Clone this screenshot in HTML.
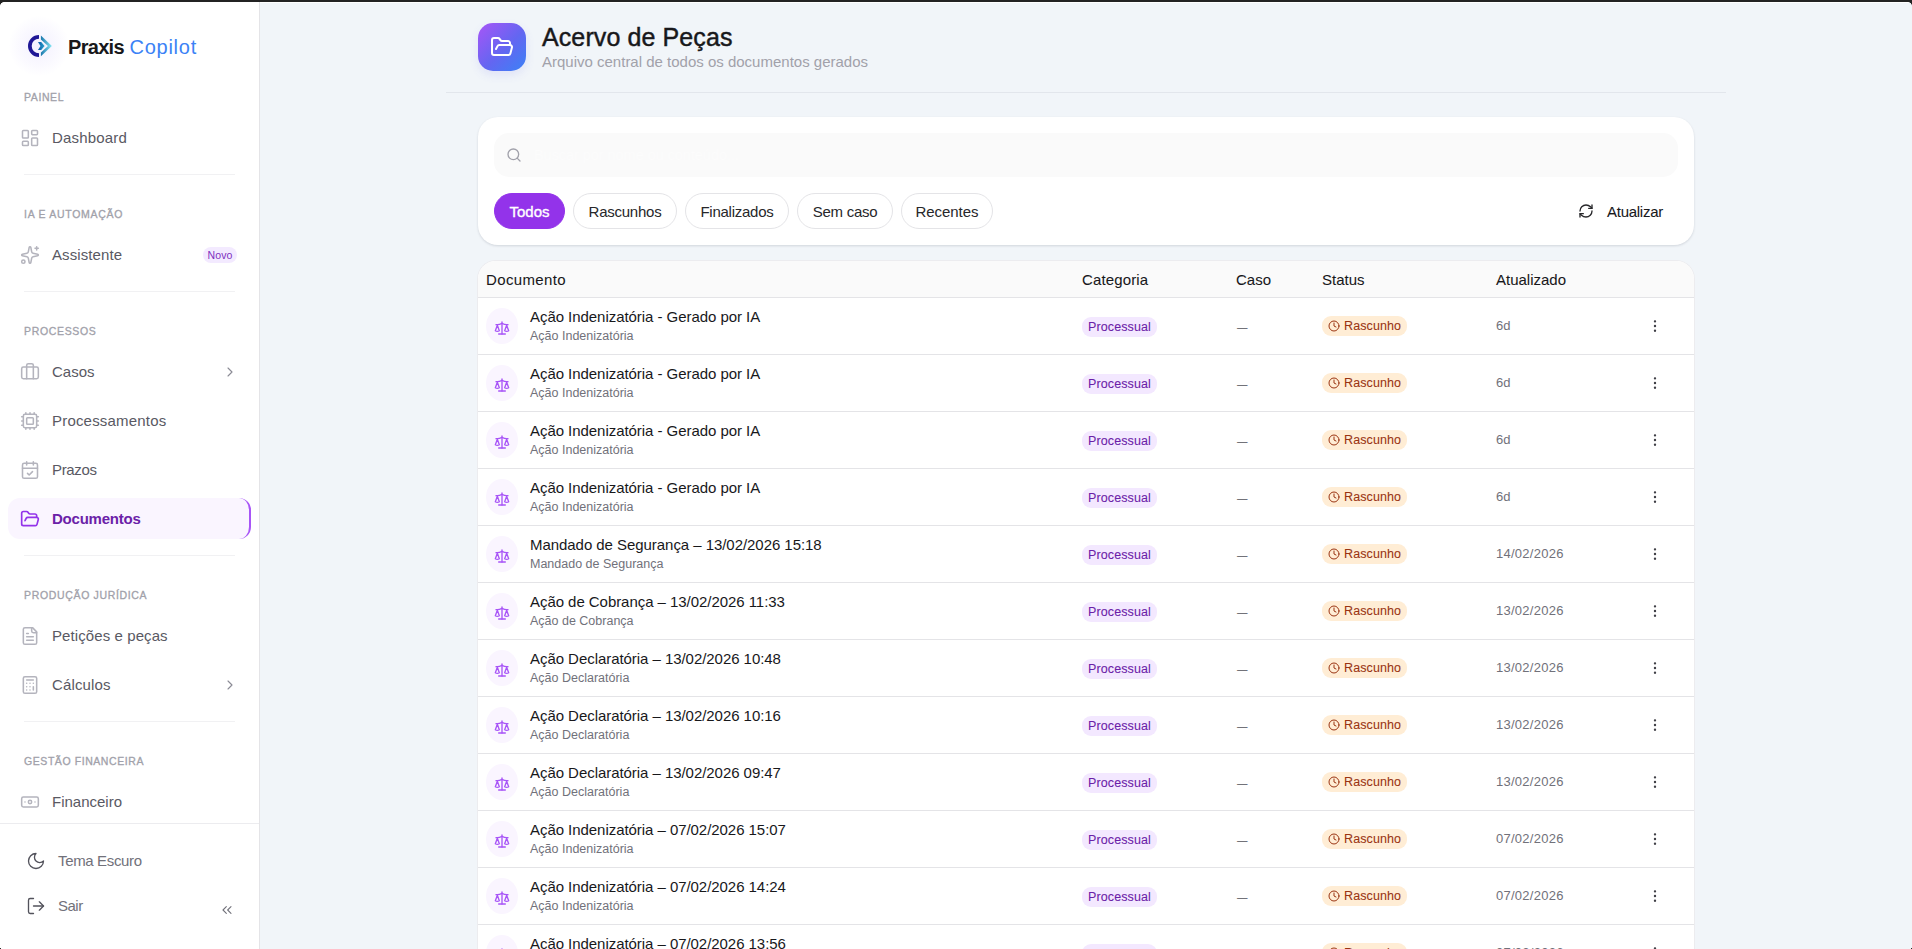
<!DOCTYPE html>
<html lang="pt-BR">
<head>
<meta charset="utf-8">
<title>Praxis Copilot - Acervo de Peças</title>
<style>
*{box-sizing:border-box;margin:0;padding:0}
html,body{width:1912px;height:949px;overflow:hidden}
body{font-family:"Liberation Sans",sans-serif;background:#f1f5f9;color:#18181b;position:relative}
.topbar{position:absolute;left:0;top:0;width:1912px;height:2px;background:#232323;z-index:50}
.topline{position:absolute;left:260px;top:2px;width:1652px;height:1px;background:#fff;z-index:49}
.corner{position:absolute;width:4px;height:4px;z-index:51}
.px{position:absolute;width:1px;height:1px;background:#2a2a2a;z-index:51;top:948px}
/* sidebar */
.sb{position:absolute;left:0;top:0;width:260px;height:949px;background:#fff;border-right:1px solid #e4e4e7}
.sb .abs{position:absolute}
.logo-glow{position:absolute;left:9px;top:16px;width:60px;height:60px;border-radius:50%;background:radial-gradient(circle,rgba(226,220,254,.42) 0%,rgba(237,233,254,.28) 45%,rgba(255,255,255,0) 72%)}
.brand{position:absolute;left:68px;top:35px;font-size:20px;line-height:24px;white-space:nowrap;color:#18181b}
.brand b{font-weight:700;letter-spacing:-.7px}
.brand span{color:#3b82f6;font-weight:400;letter-spacing:.76px}
.sec{position:absolute;left:24px;font-size:10.5px;line-height:14px;font-weight:400;-webkit-text-stroke:.3px #a1a1aa;color:#a1a1aa;white-space:nowrap}
.hr{position:absolute;left:24px;width:211px;height:1px;background:#f1f1f3}
.it{position:absolute;left:8px;width:243px;height:41px;border-radius:12px;color:#595963;font-size:15px;line-height:41px;white-space:nowrap}
.it svg{position:absolute;left:12px;top:11px;width:20px;height:20px;stroke:#b4b4bd;fill:none;stroke-width:1.85;stroke-linecap:round;stroke-linejoin:round}
.it .t{position:absolute;left:44px;top:0}
.it .chev{position:absolute;left:214px;top:13px;width:16px;height:16px;stroke:#8b8b95;stroke-width:1.7}
.it.act{background:#faf5ff;color:#6b21a8;font-weight:700;border-right:2px solid #a855f7}
.it.act svg{stroke:#9333ea;stroke-width:2}
.novo{position:absolute;left:195px;top:13px;width:34px;height:16px;border-radius:8px;background:#f3eaff;color:#7e30c0;font-size:10.5px;line-height:16px;text-align:center;letter-spacing:.15px}
.foot-line{position:absolute;left:0;top:823px;width:259px;height:1px;background:#ececef}
.ft{position:absolute;left:58px;font-size:15px;line-height:20px;color:#71717a;white-space:nowrap}
.fi{position:absolute;left:26px;width:20px;height:20px;stroke:#52525b;fill:none;stroke-width:1.6;stroke-linecap:round;stroke-linejoin:round}
/* main */
.hicon{position:absolute;left:478px;top:23px;width:48px;height:48px;border-radius:15px;background:linear-gradient(135deg,#a855f7 0%,#6366f1 55%,#3b82f6 100%);box-shadow:0 4px 10px rgba(99,102,241,.12)}
.hicon svg{position:absolute;left:12px;top:12px;width:24px;height:24px;stroke:#fff;fill:none;stroke-width:2;stroke-linecap:round;stroke-linejoin:round}
h1{position:absolute;left:542px;top:21px;font-size:25px;line-height:32px;font-weight:400;-webkit-text-stroke:.45px #18181b;color:#18181b;white-space:nowrap;letter-spacing:.1px}
.sub{position:absolute;left:542px;top:52px;font-size:15px;line-height:20px;color:#a1a1aa;white-space:nowrap}
.hline{position:absolute;left:446px;top:92px;width:1280px;height:1px;background:#e2e6ec}
.card{position:absolute;left:478px;top:117px;width:1216px;height:128px;border-radius:20px;background:#fff;box-shadow:0 1px 3px rgba(15,23,42,.09),0 1px 2px rgba(15,23,42,.05)}
.search{position:absolute;left:16px;top:16px;width:1184px;height:44px;border-radius:15px;background:#fafafa}
.search svg{position:absolute;left:12px;top:14px;width:16px;height:16px;stroke:#a1a1aa;fill:none;stroke-width:2;stroke-linecap:round}
.search .ph{position:absolute;left:40px;top:12px;font-size:14.5px;line-height:20px;color:#fcfcfc;white-space:nowrap;letter-spacing:-.05px}
.pill{position:absolute;top:76px;height:36px;border-radius:18px;border:1px solid #e4e4e7;background:#fff;font-size:15px;line-height:35px;text-align:center;color:#27272a;white-space:nowrap;letter-spacing:-.25px}
.pill.on{background:#9333ea;border-color:#9333ea;color:#fff;-webkit-text-stroke:.35px #fff;letter-spacing:0}
.upd{position:absolute;left:1129px;top:85px;font-size:15px;line-height:20px;color:#18181b;white-space:nowrap;letter-spacing:-.27px;-webkit-text-stroke:.06px #18181b}
.updi{position:absolute;left:1100px;top:86px;width:16px;height:16px;stroke:#27272a;fill:none;stroke-width:2;stroke-linecap:round;stroke-linejoin:round}
.tbl{position:absolute;left:478px;top:261px;width:1216px;height:720px;border-radius:18px 18px 0 0;background:#fff;overflow:hidden;box-shadow:0 0 0 1px #ececef,0 1px 2px rgba(15,23,42,.04)}
.th{position:absolute;left:0;top:0;width:1216px;height:37px;background:#fafafa;border-bottom:1px solid #e4e4e7;font-size:15px;line-height:38px;color:#18181b;-webkit-text-stroke:.06px #18181b}
.th span{position:absolute;top:0;white-space:nowrap}
.row{position:absolute;left:0;width:1216px;height:57px;border-bottom:1px solid #e4e4e7}
.row .ic{position:absolute;left:8px;top:10px;width:32px;height:36px;border-radius:50%;background:#faf5ff}
.row .ic svg{position:absolute;left:8px;top:12px;width:16px;height:16px;stroke:#a855f7;fill:none;stroke-width:2;stroke-linecap:round;stroke-linejoin:round}
.row .ti{position:absolute;left:52px;top:9px;font-size:15px;line-height:20px;color:#18181b;white-space:nowrap;letter-spacing:-.05px}
.row .st{position:absolute;left:52px;top:30px;font-size:12.5px;line-height:16px;color:#71717a;white-space:nowrap}
.row .cat{position:absolute;left:604px;top:19px;width:75px;height:20px;border-radius:9px;background:#f3e8ff;color:#6b21a8;font-size:12.5px;line-height:20px;text-align:center;letter-spacing:.12px;-webkit-text-stroke:.08px #6b21a8}
.row .dash{position:absolute;left:759px;top:22px;font-size:10.5px;line-height:14px;color:#52525b;white-space:nowrap}
.row .bad{position:absolute;left:844px;top:18px;width:85px;height:20px;border-radius:9px;background:#ffedd5;color:#9a3412;font-size:12.5px;line-height:20px;letter-spacing:.1px;-webkit-text-stroke:.08px #9a3412}
.row .bad svg{position:absolute;left:6px;top:4px;width:12px;height:12px;stroke:#9a3412;fill:none;stroke-width:2;stroke-linecap:round;stroke-linejoin:round}
.row .bad span{position:absolute;left:22px;top:0}
.row .dt{position:absolute;left:1018px;top:19px;font-size:13px;line-height:18px;color:#71717a;white-space:nowrap;letter-spacing:.26px}
.row .mo{position:absolute;left:1169px;top:20px;width:16px;height:16px;stroke:#3f3f46;fill:#3f3f46;stroke-width:1.6;stroke-linecap:round;stroke-linejoin:round}
</style>
</head>
<body>
<div class="topbar"></div>
<div class="topline"></div>
<div class="corner" style="left:0;top:2px;background:radial-gradient(circle at 4px 4px,rgba(35,35,35,0) 3.5px,#232323 4.3px)"></div>
<div class="corner" style="left:1908px;top:2px;background:radial-gradient(circle at 0 4px,rgba(35,35,35,0) 3.5px,#232323 4.3px)"></div>
<div class="px" style="left:0"></div><div class="px" style="left:1911px"></div>
<div class="sb">
<div class="logo-glow"></div>
<svg class="abs" style="left:19px;top:26px;width:40px;height:40px" viewBox="19 26 40 40">
<defs><linearGradient id="lg1" x1="40.9" y1="46" x2="51.9" y2="46" gradientUnits="userSpaceOnUse"><stop offset="0" stop-color="#1a78ad"/><stop offset="1" stop-color="#8be9f5"/></linearGradient>
<linearGradient id="lg2" x1="38" y1="46" x2="44.5" y2="46" gradientUnits="userSpaceOnUse"><stop offset="0" stop-color="#0a58a8"/><stop offset="1" stop-color="#2ba3cb"/></linearGradient></defs>
<path d="M39 35A11 11 0 0 0 39 57L39 53.300A7.300 7.300 0 0 1 39 38.700Z" fill="#1f1796"/>
<path d="M40.900 35.600L51.900 46L40.900 56.300L40.900 52.500L48 46L40.900 39.500Z" fill="url(#lg1)"/>
<path d="M38 42L41.200 42L44.600 46L41.200 49.900L38 49.900L40.500 46Z" fill="url(#lg2)"/>
</svg>
<div class="brand"><b>Praxis</b> <span>Copilot</span></div>
<div class="sec" style="top:90px;letter-spacing:0.58px">PAINEL</div>
<div class="it" style="top:117px"><svg viewBox="0 0 24 24"><rect width="7" height="9" x="3" y="3" rx="1"/><rect width="7" height="5" x="14" y="3" rx="1"/><rect width="7" height="9" x="14" y="12" rx="1"/><rect width="7" height="5" x="3" y="16" rx="1"/></svg><span class="t" style="letter-spacing:0.18px">Dashboard</span></div>
<div class="hr" style="top:174px"></div>
<div class="sec" style="top:207px;letter-spacing:0.72px">IA E AUTOMAÇÃO</div>
<div class="it" style="top:234px"><svg viewBox="0 0 24 24"><path d="M11.017 2.814a1 1 0 0 1 1.966 0l1.051 5.558a2 2 0 0 0 1.594 1.594l5.558 1.051a1 1 0 0 1 0 1.966l-5.558 1.051a2 2 0 0 0-1.594 1.594l-1.051 5.558a1 1 0 0 1-1.966 0l-1.051-5.558a2 2 0 0 0-1.594-1.594l-5.558-1.051a1 1 0 0 1 0-1.966l5.558-1.051a2 2 0 0 0 1.594-1.594z"/><path d="M20 2v4"/><path d="M22 4h-4"/><circle cx="4" cy="20" r="2"/></svg><span class="t" style="letter-spacing:0.09px">Assistente</span><span class="novo">Novo</span></div>
<div class="hr" style="top:291px"></div>
<div class="sec" style="top:324px;letter-spacing:0.66px">PROCESSOS</div>
<div class="it" style="top:351px"><svg viewBox="0 0 24 24"><path d="M16 20V4a2 2 0 0 0-2-2h-4a2 2 0 0 0-2 2v16"/><rect width="20" height="14" x="2" y="6" rx="2"/></svg><span class="t" style="letter-spacing:0px">Casos</span><svg class="chev" viewBox="0 0 24 24"><path d="m9 18 6-6-6-6"/></svg></div>
<div class="it" style="top:400px"><svg viewBox="0 0 24 24"><path d="M12 20v2"/><path d="M12 2v2"/><path d="M17 20v2"/><path d="M17 2v2"/><path d="M2 12h2"/><path d="M2 17h2"/><path d="M2 7h2"/><path d="M20 12h2"/><path d="M20 17h2"/><path d="M20 7h2"/><path d="M7 20v2"/><path d="M7 2v2"/><rect x="4" y="4" width="16" height="16" rx="2"/><rect x="8" y="8" width="8" height="8" rx="1"/></svg><span class="t" style="letter-spacing:0.19px">Processamentos</span></div>
<div class="it" style="top:449px"><svg viewBox="0 0 24 24"><path d="M8 2v4"/><path d="M16 2v4"/><rect width="18" height="18" x="3" y="4" rx="2"/><path d="M3 10h18"/><path d="m9 16 2 2 4-4"/></svg><span class="t" style="letter-spacing:-0.33px">Prazos</span></div>
<div class="it act" style="top:498px"><svg viewBox="0 0 24 24"><path d="m6 14 1.5-2.9A2 2 0 0 1 9.240 10H20a2 2 0 0 1 1.940 2.500l-1.540 6a2 2 0 0 1-1.950 1.500H4a2 2 0 0 1-2-2V5a2 2 0 0 1 2-2h3.900a2 2 0 0 1 1.690.900l.810 1.200a2 2 0 0 0 1.670.900H18a2 2 0 0 1 2 2v2"/></svg><span class="t" style="letter-spacing:-0.23px">Documentos</span></div>
<div class="hr" style="top:555px"></div>
<div class="sec" style="top:588px;letter-spacing:0.66px">PRODUÇÃO JURÍDICA</div>
<div class="it" style="top:615px"><svg viewBox="0 0 24 24"><path d="M15 2H6a2 2 0 0 0-2 2v16a2 2 0 0 0 2 2h12a2 2 0 0 0 2-2V7Z"/><path d="M14 2v4a2 2 0 0 0 2 2h4"/><path d="M10 9H8"/><path d="M16 13H8"/><path d="M16 17H8"/></svg><span class="t" style="letter-spacing:0.09px">Petições e peças</span></div>
<div class="it" style="top:664px"><svg viewBox="0 0 24 24"><rect width="16" height="20" x="4" y="2" rx="2"/><path d="M8 6h8"/><path d="M16 14v4"/><path d="M16 10h.01"/><path d="M12 10h.01"/><path d="M8 10h.01"/><path d="M12 14h.01"/><path d="M8 14h.01"/><path d="M12 18h.01"/><path d="M8 18h.01"/></svg><span class="t" style="letter-spacing:0.14px">Cálculos</span><svg class="chev" viewBox="0 0 24 24"><path d="m9 18 6-6-6-6"/></svg></div>
<div class="hr" style="top:721px"></div>
<div class="sec" style="top:754px;letter-spacing:0.57px">GESTÃO FINANCEIRA</div>
<div class="it" style="top:781px"><svg viewBox="0 0 24 24"><rect width="20" height="12" x="2" y="6" rx="2"/><circle cx="12" cy="12" r="2"/><path d="M6 12h.01M18 12h.01"/></svg><span class="t" style="letter-spacing:0px">Financeiro</span></div>
<div class="foot"><div class="foot-line"></div>
<svg style="top:851px" class="fi" viewBox="0 0 24 24"><path d="M12 3a6 6 0 0 0 9 9 9 9 0 1 1-9-9Z"/></svg>
<div class="ft" style="top:851px;letter-spacing:-.35px">Tema Escuro</div>
<svg style="top:896px" class="fi" viewBox="0 0 24 24"><path d="M9 21H5a2 2 0 0 1-2-2V5a2 2 0 0 1 2-2h4"/><path d="m16 17 5-5-5-5"/><path d="M21 12H9"/></svg>
<div class="ft" style="top:896px;letter-spacing:-.5px">Sair</div>
<svg style="left:219px;top:902px;width:16px;height:16px;stroke:#71717a" class="fi" viewBox="0 0 24 24"><path d="m11 17-5-5 5-5"/><path d="m18 17-5-5 5-5"/></svg>
</div>
</div>
<div class="main">
<div class="hicon"><svg viewBox="0 0 24 24"><path d="m6 14 1.5-2.9A2 2 0 0 1 9.240 10H20a2 2 0 0 1 1.940 2.500l-1.540 6a2 2 0 0 1-1.950 1.500H4a2 2 0 0 1-2-2V5a2 2 0 0 1 2-2h3.900a2 2 0 0 1 1.690.900l.810 1.200a2 2 0 0 0 1.670.900H18a2 2 0 0 1 2 2v2"/></svg></div>
<h1>Acervo de Peças</h1>
<div class="sub">Arquivo central de todos os documentos gerados</div>
<div class="hline"></div>
<div class="card"><div class="search"><svg viewBox="0 0 24 24"><circle cx="11" cy="11" r="8"/><path d="m21 21-4.300-4.300"/></svg><span class="ph">Buscar por nome ou conteúdo...</span></div><div class="pill on" style="left:16px;width:71px">Todos</div><div class="pill" style="left:95px;width:104px">Rascunhos</div><div class="pill" style="left:207px;width:104px">Finalizados</div><div class="pill" style="left:319px;width:96px">Sem caso</div><div class="pill" style="left:423px;width:92px;letter-spacing:-.05px">Recentes</div><svg class="updi" viewBox="0 0 24 24"><path d="M3 12a9 9 0 0 1 9-9 9.750 9.750 0 0 1 6.740 2.740L21 8"/><path d="M21 3v5h-5"/><path d="M21 12a9 9 0 0 1-9 9 9.750 9.750 0 0 1-6.740-2.740L3 16"/><path d="M8 16H3v5"/></svg><div class="upd">Atualizar</div></div>
<div class="tbl"><div class="th"><span style="left:8px;letter-spacing:.37px">Documento</span><span style="left:604px;letter-spacing:.14px">Categoria</span><span style="left:758px">Caso</span><span style="left:844px">Status</span><span style="left:1018px">Atualizado</span></div>
<div class="row" style="top:37px"><div class="ic"><svg viewBox="0 0 24 24"><path d="m16 16 3-8 3 8c-.870.650-1.920 1-3 1s-2.130-.350-3-1Z"/><path d="m2 16 3-8 3 8c-.870.650-1.920 1-3 1s-2.130-.350-3-1Z"/><path d="M7 21h10"/><path d="M12 3v18"/><path d="M3 7h2c2 0 5-1 7-2 2 1 5 2 7 2h2"/></svg></div><div class="ti">Ação Indenizatória - Gerado por IA</div><div class="st">Ação Indenizatória</div><div class="cat">Processual</div><div class="dash">—</div><div class="bad"><svg viewBox="0 0 24 24"><circle cx="12" cy="12" r="10"/><path d="M12 6v6l4 2"/></svg><span>Rascunho</span></div><div class="dt" style="letter-spacing:0">6d</div><svg class="mo" viewBox="0 0 24 24"><circle cx="12" cy="5" r="1"/><circle cx="12" cy="12" r="1"/><circle cx="12" cy="19" r="1"/></svg></div>
<div class="row" style="top:94px"><div class="ic"><svg viewBox="0 0 24 24"><path d="m16 16 3-8 3 8c-.870.650-1.920 1-3 1s-2.130-.350-3-1Z"/><path d="m2 16 3-8 3 8c-.870.650-1.920 1-3 1s-2.130-.350-3-1Z"/><path d="M7 21h10"/><path d="M12 3v18"/><path d="M3 7h2c2 0 5-1 7-2 2 1 5 2 7 2h2"/></svg></div><div class="ti">Ação Indenizatória - Gerado por IA</div><div class="st">Ação Indenizatória</div><div class="cat">Processual</div><div class="dash">—</div><div class="bad"><svg viewBox="0 0 24 24"><circle cx="12" cy="12" r="10"/><path d="M12 6v6l4 2"/></svg><span>Rascunho</span></div><div class="dt" style="letter-spacing:0">6d</div><svg class="mo" viewBox="0 0 24 24"><circle cx="12" cy="5" r="1"/><circle cx="12" cy="12" r="1"/><circle cx="12" cy="19" r="1"/></svg></div>
<div class="row" style="top:151px"><div class="ic"><svg viewBox="0 0 24 24"><path d="m16 16 3-8 3 8c-.870.650-1.920 1-3 1s-2.130-.350-3-1Z"/><path d="m2 16 3-8 3 8c-.870.650-1.920 1-3 1s-2.130-.350-3-1Z"/><path d="M7 21h10"/><path d="M12 3v18"/><path d="M3 7h2c2 0 5-1 7-2 2 1 5 2 7 2h2"/></svg></div><div class="ti">Ação Indenizatória - Gerado por IA</div><div class="st">Ação Indenizatória</div><div class="cat">Processual</div><div class="dash">—</div><div class="bad"><svg viewBox="0 0 24 24"><circle cx="12" cy="12" r="10"/><path d="M12 6v6l4 2"/></svg><span>Rascunho</span></div><div class="dt" style="letter-spacing:0">6d</div><svg class="mo" viewBox="0 0 24 24"><circle cx="12" cy="5" r="1"/><circle cx="12" cy="12" r="1"/><circle cx="12" cy="19" r="1"/></svg></div>
<div class="row" style="top:208px"><div class="ic"><svg viewBox="0 0 24 24"><path d="m16 16 3-8 3 8c-.870.650-1.920 1-3 1s-2.130-.350-3-1Z"/><path d="m2 16 3-8 3 8c-.870.650-1.920 1-3 1s-2.130-.350-3-1Z"/><path d="M7 21h10"/><path d="M12 3v18"/><path d="M3 7h2c2 0 5-1 7-2 2 1 5 2 7 2h2"/></svg></div><div class="ti">Ação Indenizatória - Gerado por IA</div><div class="st">Ação Indenizatória</div><div class="cat">Processual</div><div class="dash">—</div><div class="bad"><svg viewBox="0 0 24 24"><circle cx="12" cy="12" r="10"/><path d="M12 6v6l4 2"/></svg><span>Rascunho</span></div><div class="dt" style="letter-spacing:0">6d</div><svg class="mo" viewBox="0 0 24 24"><circle cx="12" cy="5" r="1"/><circle cx="12" cy="12" r="1"/><circle cx="12" cy="19" r="1"/></svg></div>
<div class="row" style="top:265px"><div class="ic"><svg viewBox="0 0 24 24"><path d="m16 16 3-8 3 8c-.870.650-1.920 1-3 1s-2.130-.350-3-1Z"/><path d="m2 16 3-8 3 8c-.870.650-1.920 1-3 1s-2.130-.350-3-1Z"/><path d="M7 21h10"/><path d="M12 3v18"/><path d="M3 7h2c2 0 5-1 7-2 2 1 5 2 7 2h2"/></svg></div><div class="ti">Mandado de Segurança – 13/02/2026 15:18</div><div class="st">Mandado de Segurança</div><div class="cat">Processual</div><div class="dash">—</div><div class="bad"><svg viewBox="0 0 24 24"><circle cx="12" cy="12" r="10"/><path d="M12 6v6l4 2"/></svg><span>Rascunho</span></div><div class="dt">14/02/2026</div><svg class="mo" viewBox="0 0 24 24"><circle cx="12" cy="5" r="1"/><circle cx="12" cy="12" r="1"/><circle cx="12" cy="19" r="1"/></svg></div>
<div class="row" style="top:322px"><div class="ic"><svg viewBox="0 0 24 24"><path d="m16 16 3-8 3 8c-.870.650-1.920 1-3 1s-2.130-.350-3-1Z"/><path d="m2 16 3-8 3 8c-.870.650-1.920 1-3 1s-2.130-.350-3-1Z"/><path d="M7 21h10"/><path d="M12 3v18"/><path d="M3 7h2c2 0 5-1 7-2 2 1 5 2 7 2h2"/></svg></div><div class="ti">Ação de Cobrança – 13/02/2026 11:33</div><div class="st">Ação de Cobrança</div><div class="cat">Processual</div><div class="dash">—</div><div class="bad"><svg viewBox="0 0 24 24"><circle cx="12" cy="12" r="10"/><path d="M12 6v6l4 2"/></svg><span>Rascunho</span></div><div class="dt">13/02/2026</div><svg class="mo" viewBox="0 0 24 24"><circle cx="12" cy="5" r="1"/><circle cx="12" cy="12" r="1"/><circle cx="12" cy="19" r="1"/></svg></div>
<div class="row" style="top:379px"><div class="ic"><svg viewBox="0 0 24 24"><path d="m16 16 3-8 3 8c-.870.650-1.920 1-3 1s-2.130-.350-3-1Z"/><path d="m2 16 3-8 3 8c-.870.650-1.920 1-3 1s-2.130-.350-3-1Z"/><path d="M7 21h10"/><path d="M12 3v18"/><path d="M3 7h2c2 0 5-1 7-2 2 1 5 2 7 2h2"/></svg></div><div class="ti">Ação Declaratória – 13/02/2026 10:48</div><div class="st">Ação Declaratória</div><div class="cat">Processual</div><div class="dash">—</div><div class="bad"><svg viewBox="0 0 24 24"><circle cx="12" cy="12" r="10"/><path d="M12 6v6l4 2"/></svg><span>Rascunho</span></div><div class="dt">13/02/2026</div><svg class="mo" viewBox="0 0 24 24"><circle cx="12" cy="5" r="1"/><circle cx="12" cy="12" r="1"/><circle cx="12" cy="19" r="1"/></svg></div>
<div class="row" style="top:436px"><div class="ic"><svg viewBox="0 0 24 24"><path d="m16 16 3-8 3 8c-.870.650-1.920 1-3 1s-2.130-.350-3-1Z"/><path d="m2 16 3-8 3 8c-.870.650-1.920 1-3 1s-2.130-.350-3-1Z"/><path d="M7 21h10"/><path d="M12 3v18"/><path d="M3 7h2c2 0 5-1 7-2 2 1 5 2 7 2h2"/></svg></div><div class="ti">Ação Declaratória – 13/02/2026 10:16</div><div class="st">Ação Declaratória</div><div class="cat">Processual</div><div class="dash">—</div><div class="bad"><svg viewBox="0 0 24 24"><circle cx="12" cy="12" r="10"/><path d="M12 6v6l4 2"/></svg><span>Rascunho</span></div><div class="dt">13/02/2026</div><svg class="mo" viewBox="0 0 24 24"><circle cx="12" cy="5" r="1"/><circle cx="12" cy="12" r="1"/><circle cx="12" cy="19" r="1"/></svg></div>
<div class="row" style="top:493px"><div class="ic"><svg viewBox="0 0 24 24"><path d="m16 16 3-8 3 8c-.870.650-1.920 1-3 1s-2.130-.350-3-1Z"/><path d="m2 16 3-8 3 8c-.870.650-1.920 1-3 1s-2.130-.350-3-1Z"/><path d="M7 21h10"/><path d="M12 3v18"/><path d="M3 7h2c2 0 5-1 7-2 2 1 5 2 7 2h2"/></svg></div><div class="ti">Ação Declaratória – 13/02/2026 09:47</div><div class="st">Ação Declaratória</div><div class="cat">Processual</div><div class="dash">—</div><div class="bad"><svg viewBox="0 0 24 24"><circle cx="12" cy="12" r="10"/><path d="M12 6v6l4 2"/></svg><span>Rascunho</span></div><div class="dt">13/02/2026</div><svg class="mo" viewBox="0 0 24 24"><circle cx="12" cy="5" r="1"/><circle cx="12" cy="12" r="1"/><circle cx="12" cy="19" r="1"/></svg></div>
<div class="row" style="top:550px"><div class="ic"><svg viewBox="0 0 24 24"><path d="m16 16 3-8 3 8c-.870.650-1.920 1-3 1s-2.130-.350-3-1Z"/><path d="m2 16 3-8 3 8c-.870.650-1.920 1-3 1s-2.130-.350-3-1Z"/><path d="M7 21h10"/><path d="M12 3v18"/><path d="M3 7h2c2 0 5-1 7-2 2 1 5 2 7 2h2"/></svg></div><div class="ti">Ação Indenizatória – 07/02/2026 15:07</div><div class="st">Ação Indenizatória</div><div class="cat">Processual</div><div class="dash">—</div><div class="bad"><svg viewBox="0 0 24 24"><circle cx="12" cy="12" r="10"/><path d="M12 6v6l4 2"/></svg><span>Rascunho</span></div><div class="dt">07/02/2026</div><svg class="mo" viewBox="0 0 24 24"><circle cx="12" cy="5" r="1"/><circle cx="12" cy="12" r="1"/><circle cx="12" cy="19" r="1"/></svg></div>
<div class="row" style="top:607px"><div class="ic"><svg viewBox="0 0 24 24"><path d="m16 16 3-8 3 8c-.870.650-1.920 1-3 1s-2.130-.350-3-1Z"/><path d="m2 16 3-8 3 8c-.870.650-1.920 1-3 1s-2.130-.350-3-1Z"/><path d="M7 21h10"/><path d="M12 3v18"/><path d="M3 7h2c2 0 5-1 7-2 2 1 5 2 7 2h2"/></svg></div><div class="ti">Ação Indenizatória – 07/02/2026 14:24</div><div class="st">Ação Indenizatória</div><div class="cat">Processual</div><div class="dash">—</div><div class="bad"><svg viewBox="0 0 24 24"><circle cx="12" cy="12" r="10"/><path d="M12 6v6l4 2"/></svg><span>Rascunho</span></div><div class="dt">07/02/2026</div><svg class="mo" viewBox="0 0 24 24"><circle cx="12" cy="5" r="1"/><circle cx="12" cy="12" r="1"/><circle cx="12" cy="19" r="1"/></svg></div>
<div class="row" style="top:664px"><div class="ic"><svg viewBox="0 0 24 24"><path d="m16 16 3-8 3 8c-.870.650-1.920 1-3 1s-2.130-.350-3-1Z"/><path d="m2 16 3-8 3 8c-.870.650-1.920 1-3 1s-2.130-.350-3-1Z"/><path d="M7 21h10"/><path d="M12 3v18"/><path d="M3 7h2c2 0 5-1 7-2 2 1 5 2 7 2h2"/></svg></div><div class="ti">Ação Indenizatória – 07/02/2026 13:56</div><div class="st">Ação Indenizatória</div><div class="cat">Processual</div><div class="dash">—</div><div class="bad"><svg viewBox="0 0 24 24"><circle cx="12" cy="12" r="10"/><path d="M12 6v6l4 2"/></svg><span>Rascunho</span></div><div class="dt">07/02/2026</div><svg class="mo" viewBox="0 0 24 24"><circle cx="12" cy="5" r="1"/><circle cx="12" cy="12" r="1"/><circle cx="12" cy="19" r="1"/></svg></div>
</div>
</div>
</body>
</html>
